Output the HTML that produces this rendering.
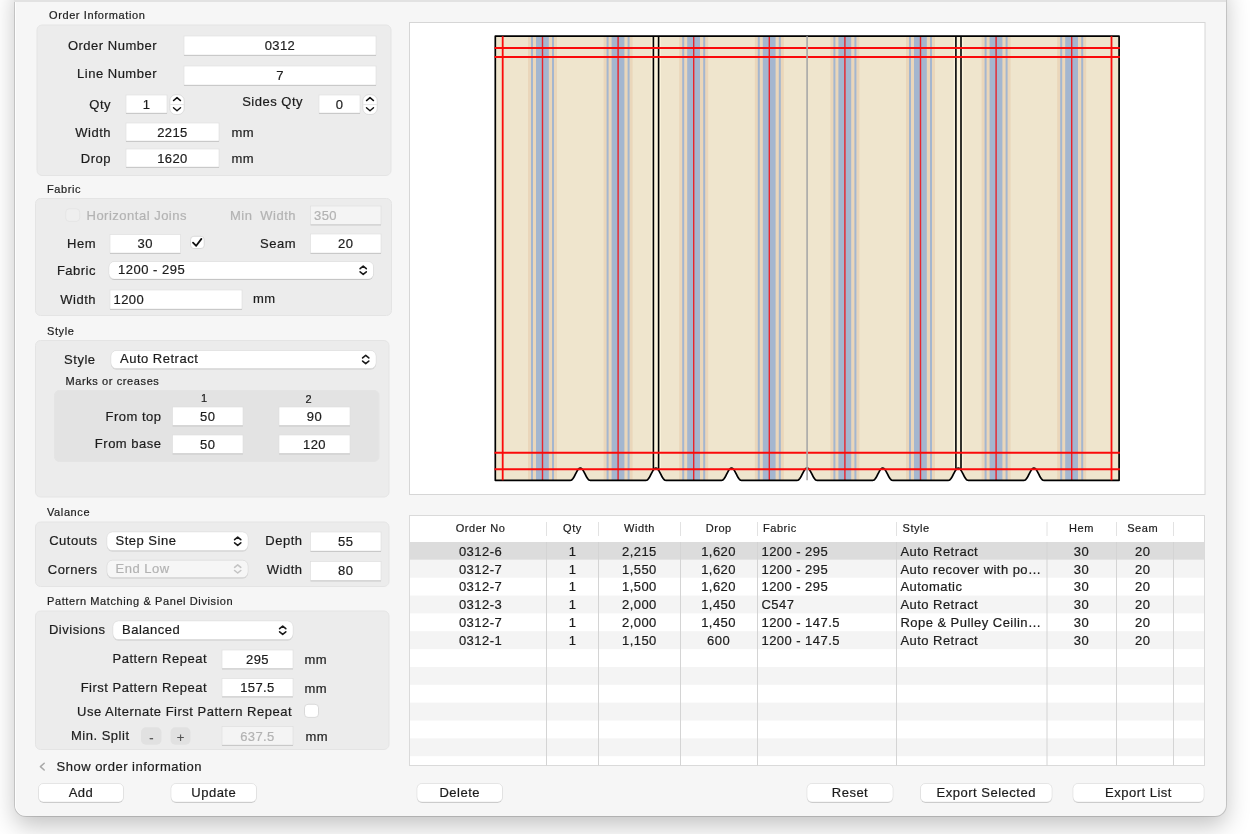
<!DOCTYPE html>
<html><head><meta charset="utf-8"><style>
html,body{margin:0;padding:0;width:1250px;height:834px;overflow:hidden;background:#f6f6f6;}
#bg{position:absolute;left:0;top:0;width:1250px;height:834px;background:#ffffff;}
#win{position:absolute;left:15px;top:-20px;width:1211px;height:836px;background:#f6f6f6;border-radius:11px;
box-shadow:0 0 0 1px rgba(0,0,0,0.14), inset 1px 0 0 rgba(255,255,255,0.8), 0 10px 24px rgba(0,0,0,0.24);}
svg{position:absolute;left:0;top:0;will-change:transform;}
text{font-family:"Liberation Sans", sans-serif;}
</style></head><body><div id="bg"></div><div id="win"></div>
<svg width="1250" height="834" viewBox="0 0 1250 834">
<defs>
<filter id="sh" x="-10%" y="-30%" width="120%" height="170%">
<feDropShadow dx="0" dy="0.5" stdDeviation="0.6" flood-color="#000" flood-opacity="0.28"/>
</filter>
</defs>

<rect x="14" y="0" width="1212" height="2" fill="#e2e2e2"/>
<text x="49" y="19.4" font-size="11" text-anchor="start" fill="#1c1c1c" stroke="#1c1c1c" stroke-width="0.2" letter-spacing="0.6" >Order Information</text>
<rect x="37" y="25" width="354" height="150.5" rx="5" fill="#ececec" stroke="#e4e4e4" stroke-width="1"/>
<text x="157" y="50.4" font-size="13" text-anchor="end" fill="#1c1c1c" stroke="#1c1c1c" stroke-width="0.2" letter-spacing="0.5" >Order Number</text>
<rect x="184" y="36" width="192" height="19" fill="#ffffff"/>
<rect x="184" y="36" width="192" height="19" fill="none" stroke="#dcdcdc" stroke-width="0.6"/>
<line x1="184" y1="55.5" x2="376" y2="55.5" stroke="#c9c9c9" stroke-width="1"/>
<text x="280.0" y="50" font-size="13" text-anchor="middle" fill="#1c1c1c" stroke="#1c1c1c" stroke-width="0.2" letter-spacing="0.4" >0312</text>
<text x="157" y="78" font-size="13" text-anchor="end" fill="#1c1c1c" stroke="#1c1c1c" stroke-width="0.2" letter-spacing="0.5" >Line Number</text>
<rect x="184" y="66" width="192" height="19" fill="#ffffff"/>
<rect x="184" y="66" width="192" height="19" fill="none" stroke="#dcdcdc" stroke-width="0.6"/>
<line x1="184" y1="85.5" x2="376" y2="85.5" stroke="#c9c9c9" stroke-width="1"/>
<text x="280.0" y="80" font-size="13" text-anchor="middle" fill="#1c1c1c" stroke="#1c1c1c" stroke-width="0.2" letter-spacing="0.4" >7</text>
<text x="111" y="108.8" font-size="13" text-anchor="end" fill="#1c1c1c" stroke="#1c1c1c" stroke-width="0.2" letter-spacing="0.5" >Qty</text>
<rect x="126" y="95" width="41" height="18" fill="#ffffff"/>
<rect x="126" y="95" width="41" height="18" fill="none" stroke="#dcdcdc" stroke-width="0.6"/>
<line x1="126" y1="113.5" x2="167" y2="113.5" stroke="#c9c9c9" stroke-width="1"/>
<text x="146.5" y="108.5" font-size="13" text-anchor="middle" fill="#1c1c1c" stroke="#1c1c1c" stroke-width="0.2" letter-spacing="0.4" >1</text>
<rect x="169.8" y="94.7" width="14.399999999999977" height="19.799999999999997" rx="6" fill="#ffffff" stroke="#d6d6d6" stroke-width="0.8"/>
<line x1="170.3" y1="104.6" x2="183.7" y2="104.6" stroke="#dedede" stroke-width="0.8"/>
<path d="M173.5 100.6 L177.0 97.6 L180.5 100.6 M173.5 107.8 L177.0 110.8 L180.5 107.8" fill="none" stroke="#111" stroke-width="1.4" stroke-linecap="round" stroke-linejoin="round"/>
<text x="303" y="105.6" font-size="13" text-anchor="end" fill="#1c1c1c" stroke="#1c1c1c" stroke-width="0.2" letter-spacing="0.5" >Sides Qty</text>
<rect x="319" y="95" width="41" height="18" fill="#ffffff"/>
<rect x="319" y="95" width="41" height="18" fill="none" stroke="#dcdcdc" stroke-width="0.6"/>
<line x1="319" y1="113.5" x2="360" y2="113.5" stroke="#c9c9c9" stroke-width="1"/>
<text x="339.5" y="108.5" font-size="13" text-anchor="middle" fill="#1c1c1c" stroke="#1c1c1c" stroke-width="0.2" letter-spacing="0.4" >0</text>
<rect x="362.8" y="94.7" width="14.399999999999977" height="19.799999999999997" rx="6" fill="#ffffff" stroke="#d6d6d6" stroke-width="0.8"/>
<line x1="363.3" y1="104.6" x2="376.7" y2="104.6" stroke="#dedede" stroke-width="0.8"/>
<path d="M366.5 100.6 L370.0 97.6 L373.5 100.6 M366.5 107.8 L370.0 110.8 L373.5 107.8" fill="none" stroke="#111" stroke-width="1.4" stroke-linecap="round" stroke-linejoin="round"/>
<text x="111" y="136.5" font-size="13" text-anchor="end" fill="#1c1c1c" stroke="#1c1c1c" stroke-width="0.2" letter-spacing="0.5" >Width</text>
<rect x="126" y="123" width="93" height="18" fill="#ffffff"/>
<rect x="126" y="123" width="93" height="18" fill="none" stroke="#dcdcdc" stroke-width="0.6"/>
<line x1="126" y1="141.5" x2="219" y2="141.5" stroke="#c9c9c9" stroke-width="1"/>
<text x="172.5" y="136.5" font-size="13" text-anchor="middle" fill="#1c1c1c" stroke="#1c1c1c" stroke-width="0.2" letter-spacing="0.4" >2215</text>
<text x="231.5" y="136.5" font-size="13" text-anchor="start" fill="#1c1c1c" stroke="#1c1c1c" stroke-width="0.2" letter-spacing="0.5" >mm</text>
<text x="111" y="163" font-size="13" text-anchor="end" fill="#1c1c1c" stroke="#1c1c1c" stroke-width="0.2" letter-spacing="0.5" >Drop</text>
<rect x="126" y="149" width="93" height="18" fill="#ffffff"/>
<rect x="126" y="149" width="93" height="18" fill="none" stroke="#dcdcdc" stroke-width="0.6"/>
<line x1="126" y1="167.5" x2="219" y2="167.5" stroke="#c9c9c9" stroke-width="1"/>
<text x="172.5" y="163" font-size="13" text-anchor="middle" fill="#1c1c1c" stroke="#1c1c1c" stroke-width="0.2" letter-spacing="0.4" >1620</text>
<text x="231.5" y="163" font-size="13" text-anchor="start" fill="#1c1c1c" stroke="#1c1c1c" stroke-width="0.2" letter-spacing="0.5" >mm</text>
<text x="47" y="192.8" font-size="11" text-anchor="start" fill="#1c1c1c" stroke="#1c1c1c" stroke-width="0.2" letter-spacing="0.6" >Fabric</text>
<rect x="35.5" y="198.5" width="356.0" height="117.0" rx="5" fill="#ececec" stroke="#e4e4e4" stroke-width="1"/>
<rect x="65.7" y="208.8" width="14" height="12.6" rx="3.5" fill="#efefef" stroke="#e2e2e2" stroke-width="0.8"/>
<text x="86.5" y="219.7" font-size="13" text-anchor="start" fill="#b3b3b3" stroke="#b3b3b3" stroke-width="0.2" letter-spacing="0.5" >Horizontal Joins</text>
<text x="230" y="219.8" font-size="13" text-anchor="start" fill="#b3b3b3" stroke="#b3b3b3" stroke-width="0.2" letter-spacing="0.5" >Min</text>
<text x="296" y="219.8" font-size="13" text-anchor="end" fill="#b3b3b3" stroke="#b3b3b3" stroke-width="0.2" letter-spacing="0.5" >Width</text>
<rect x="310.5" y="206" width="70.5" height="18.5" fill="#f4f4f4"/>
<rect x="310.5" y="206" width="70.5" height="18.5" fill="none" stroke="#dcdcdc" stroke-width="0.6"/>
<line x1="310.5" y1="225.0" x2="381" y2="225.0" stroke="#c9c9c9" stroke-width="1"/>
<text x="314" y="219.7" font-size="13" text-anchor="start" fill="#b3b3b3" stroke="#b3b3b3" stroke-width="0.2" letter-spacing="0.4" >350</text>
<text x="96" y="248" font-size="13" text-anchor="end" fill="#1c1c1c" stroke="#1c1c1c" stroke-width="0.2" letter-spacing="0.5" >Hem</text>
<rect x="110" y="234.5" width="70.5" height="18.5" fill="#ffffff"/>
<rect x="110" y="234.5" width="70.5" height="18.5" fill="none" stroke="#dcdcdc" stroke-width="0.6"/>
<line x1="110" y1="253.5" x2="180.5" y2="253.5" stroke="#c9c9c9" stroke-width="1"/>
<text x="145.25" y="248" font-size="13" text-anchor="middle" fill="#1c1c1c" stroke="#1c1c1c" stroke-width="0.2" letter-spacing="0.4" >30</text>
<rect x="190.6" y="236.3" width="13.6" height="12.2" rx="3.2" fill="#ffffff" stroke="#d2d2d2" stroke-width="0.8"/>
<path d="M193 242.6 L196.2 245.8 L201.4 238.9" fill="none" stroke="#111" stroke-width="1.8" stroke-linecap="round" stroke-linejoin="round"/>
<text x="296" y="247.8" font-size="13" text-anchor="end" fill="#1c1c1c" stroke="#1c1c1c" stroke-width="0.2" letter-spacing="0.5" >Seam</text>
<rect x="310.5" y="234" width="70.5" height="19" fill="#ffffff"/>
<rect x="310.5" y="234" width="70.5" height="19" fill="none" stroke="#dcdcdc" stroke-width="0.6"/>
<line x1="310.5" y1="253.5" x2="381" y2="253.5" stroke="#c9c9c9" stroke-width="1"/>
<text x="345.75" y="248" font-size="13" text-anchor="middle" fill="#1c1c1c" stroke="#1c1c1c" stroke-width="0.2" letter-spacing="0.4" >20</text>
<text x="96" y="275" font-size="13" text-anchor="end" fill="#1c1c1c" stroke="#1c1c1c" stroke-width="0.2" letter-spacing="0.5" >Fabric</text>
<rect x="109" y="261.5" width="264.5" height="17.5" rx="5.5" fill="#ffffff" filter="url(#sh)"/>
<rect x="109" y="261.5" width="264.5" height="17.5" rx="5.5" fill="none" stroke="#000" stroke-opacity="0.07" stroke-width="0.8"/>
<text x="118" y="273.6" font-size="13" text-anchor="start" fill="#1c1c1c" stroke="#1c1c1c" stroke-width="0.2" letter-spacing="0.5" >1200 - 295</text>
<path d="M360.09999999999997 268.65 L363.2 266.15 L366.3 268.65 M360.09999999999997 271.85 L363.2 274.35 L366.3 271.85" fill="none" stroke="#1a1a1a" stroke-width="1.6" stroke-linecap="round" stroke-linejoin="round"/>
<text x="96" y="303.5" font-size="13" text-anchor="end" fill="#1c1c1c" stroke="#1c1c1c" stroke-width="0.2" letter-spacing="0.5" >Width</text>
<rect x="110" y="290" width="132" height="19" fill="#ffffff"/>
<rect x="110" y="290" width="132" height="19" fill="none" stroke="#dcdcdc" stroke-width="0.6"/>
<line x1="110" y1="309.5" x2="242" y2="309.5" stroke="#c9c9c9" stroke-width="1"/>
<text x="113.5" y="304.2" font-size="13" text-anchor="start" fill="#1c1c1c" stroke="#1c1c1c" stroke-width="0.2" letter-spacing="0.4" >1200</text>
<text x="253" y="303" font-size="13" text-anchor="start" fill="#1c1c1c" stroke="#1c1c1c" stroke-width="0.2" letter-spacing="0.5" >mm</text>
<text x="47" y="334.7" font-size="11" text-anchor="start" fill="#1c1c1c" stroke="#1c1c1c" stroke-width="0.2" letter-spacing="0.6" >Style</text>
<rect x="35.5" y="340.5" width="353.5" height="156.5" rx="5" fill="#ececec" stroke="#e4e4e4" stroke-width="1"/>
<text x="95.5" y="364" font-size="13" text-anchor="end" fill="#1c1c1c" stroke="#1c1c1c" stroke-width="0.2" letter-spacing="0.5" >Style</text>
<rect x="111" y="350.5" width="265" height="18.0" rx="5.5" fill="#ffffff" filter="url(#sh)"/>
<rect x="111" y="350.5" width="265" height="18.0" rx="5.5" fill="none" stroke="#000" stroke-opacity="0.07" stroke-width="0.8"/>
<text x="120" y="363" font-size="13" text-anchor="start" fill="#1c1c1c" stroke="#1c1c1c" stroke-width="0.2" letter-spacing="0.5" >Auto Retract</text>
<path d="M362.59999999999997 357.9 L365.7 355.4 L368.8 357.9 M362.59999999999997 361.1 L365.7 363.6 L368.8 361.1" fill="none" stroke="#1a1a1a" stroke-width="1.6" stroke-linecap="round" stroke-linejoin="round"/>
<text x="65.5" y="384.8" font-size="11" text-anchor="start" fill="#1c1c1c" stroke="#1c1c1c" stroke-width="0.2" letter-spacing="0.6" >Marks or creases</text>
<rect x="54.5" y="390.5" width="324.5" height="71.0" rx="5" fill="#e3e3e3" stroke="#e4e4e4" stroke-width="1"/>
<text x="204" y="402.4" font-size="11" text-anchor="middle" fill="#1c1c1c" stroke="#1c1c1c" stroke-width="0.2" letter-spacing="0" >1</text>
<text x="308.6" y="402.8" font-size="11" text-anchor="middle" fill="#1c1c1c" stroke="#1c1c1c" stroke-width="0.2" letter-spacing="0" >2</text>
<text x="161.5" y="420.8" font-size="13" text-anchor="end" fill="#1c1c1c" stroke="#1c1c1c" stroke-width="0.2" letter-spacing="0.5" >From top</text>
<rect x="172.5" y="407" width="70.5" height="18.5" fill="#ffffff"/>
<rect x="172.5" y="407" width="70.5" height="18.5" fill="none" stroke="#dcdcdc" stroke-width="0.6"/>
<line x1="172.5" y1="426.0" x2="243" y2="426.0" stroke="#c9c9c9" stroke-width="1"/>
<text x="207.75" y="421" font-size="13" text-anchor="middle" fill="#1c1c1c" stroke="#1c1c1c" stroke-width="0.2" letter-spacing="0.4" >50</text>
<rect x="279" y="407" width="71" height="18.5" fill="#ffffff"/>
<rect x="279" y="407" width="71" height="18.5" fill="none" stroke="#dcdcdc" stroke-width="0.6"/>
<line x1="279" y1="426.0" x2="350" y2="426.0" stroke="#c9c9c9" stroke-width="1"/>
<text x="314.5" y="421" font-size="13" text-anchor="middle" fill="#1c1c1c" stroke="#1c1c1c" stroke-width="0.2" letter-spacing="0.4" >90</text>
<text x="161.5" y="447.5" font-size="13" text-anchor="end" fill="#1c1c1c" stroke="#1c1c1c" stroke-width="0.2" letter-spacing="0.5" >From base</text>
<rect x="172.5" y="435" width="70.5" height="18.5" fill="#ffffff"/>
<rect x="172.5" y="435" width="70.5" height="18.5" fill="none" stroke="#dcdcdc" stroke-width="0.6"/>
<line x1="172.5" y1="454.0" x2="243" y2="454.0" stroke="#c9c9c9" stroke-width="1"/>
<text x="207.75" y="448.5" font-size="13" text-anchor="middle" fill="#1c1c1c" stroke="#1c1c1c" stroke-width="0.2" letter-spacing="0.4" >50</text>
<rect x="279" y="435" width="71" height="18.5" fill="#ffffff"/>
<rect x="279" y="435" width="71" height="18.5" fill="none" stroke="#dcdcdc" stroke-width="0.6"/>
<line x1="279" y1="454.0" x2="350" y2="454.0" stroke="#c9c9c9" stroke-width="1"/>
<text x="314.5" y="448.5" font-size="13" text-anchor="middle" fill="#1c1c1c" stroke="#1c1c1c" stroke-width="0.2" letter-spacing="0.4" >120</text>
<text x="47" y="516" font-size="11" text-anchor="start" fill="#1c1c1c" stroke="#1c1c1c" stroke-width="0.2" letter-spacing="0.6" >Valance</text>
<rect x="35.5" y="522" width="353.5" height="64.5" rx="5" fill="#ececec" stroke="#e4e4e4" stroke-width="1"/>
<text x="97.5" y="545.3" font-size="13" text-anchor="end" fill="#1c1c1c" stroke="#1c1c1c" stroke-width="0.2" letter-spacing="0.5" >Cutouts</text>
<rect x="107" y="532" width="141" height="18.5" rx="5.5" fill="#ffffff" filter="url(#sh)"/>
<rect x="107" y="532" width="141" height="18.5" rx="5.5" fill="none" stroke="#000" stroke-opacity="0.07" stroke-width="0.8"/>
<text x="115.5" y="545" font-size="13" text-anchor="start" fill="#1c1c1c" stroke="#1c1c1c" stroke-width="0.2" letter-spacing="0.5" >Step Sine</text>
<path d="M234.6 539.65 L237.7 537.15 L240.79999999999998 539.65 M234.6 542.85 L237.7 545.35 L240.79999999999998 542.85" fill="none" stroke="#1a1a1a" stroke-width="1.6" stroke-linecap="round" stroke-linejoin="round"/>
<text x="302.5" y="545.3" font-size="13" text-anchor="end" fill="#1c1c1c" stroke="#1c1c1c" stroke-width="0.2" letter-spacing="0.5" >Depth</text>
<rect x="310.5" y="532" width="70.5" height="19" fill="#ffffff"/>
<rect x="310.5" y="532" width="70.5" height="19" fill="none" stroke="#dcdcdc" stroke-width="0.6"/>
<line x1="310.5" y1="551.5" x2="381" y2="551.5" stroke="#c9c9c9" stroke-width="1"/>
<text x="345.75" y="546" font-size="13" text-anchor="middle" fill="#1c1c1c" stroke="#1c1c1c" stroke-width="0.2" letter-spacing="0.4" >55</text>
<text x="97.5" y="573.6" font-size="13" text-anchor="end" fill="#1c1c1c" stroke="#1c1c1c" stroke-width="0.2" letter-spacing="0.5" >Corners</text>
<rect x="107" y="560.2" width="141" height="17.399999999999977" rx="5.5" fill="#f6f6f6" filter="url(#sh)"/>
<rect x="107" y="560.2" width="141" height="17.399999999999977" rx="5.5" fill="none" stroke="#000" stroke-opacity="0.07" stroke-width="0.8"/>
<text x="115.5" y="572.8" font-size="13" text-anchor="start" fill="#b3b3b3" stroke="#b3b3b3" stroke-width="0.2" letter-spacing="0.5" >End Low</text>
<path d="M234.6 567.3000000000001 L237.7 564.8000000000001 L240.79999999999998 567.3000000000001 M234.6 570.5000000000001 L237.7 573.0000000000001 L240.79999999999998 570.5000000000001" fill="none" stroke="#c4c4c4" stroke-width="1.6" stroke-linecap="round" stroke-linejoin="round"/>
<text x="302.5" y="574.4" font-size="13" text-anchor="end" fill="#1c1c1c" stroke="#1c1c1c" stroke-width="0.2" letter-spacing="0.5" >Width</text>
<rect x="310.5" y="561.5" width="70.5" height="19.0" fill="#ffffff"/>
<rect x="310.5" y="561.5" width="70.5" height="19.0" fill="none" stroke="#dcdcdc" stroke-width="0.6"/>
<line x1="310.5" y1="581.0" x2="381" y2="581.0" stroke="#c9c9c9" stroke-width="1"/>
<text x="345.75" y="575" font-size="13" text-anchor="middle" fill="#1c1c1c" stroke="#1c1c1c" stroke-width="0.2" letter-spacing="0.4" >80</text>
<text x="47" y="604.9" font-size="11" text-anchor="start" fill="#1c1c1c" stroke="#1c1c1c" stroke-width="0.2" letter-spacing="0.6" >Pattern Matching &amp; Panel Division</text>
<rect x="35.5" y="611" width="353.5" height="138.5" rx="5" fill="#ececec" stroke="#e4e4e4" stroke-width="1"/>
<text x="105.5" y="634.4" font-size="13" text-anchor="end" fill="#1c1c1c" stroke="#1c1c1c" stroke-width="0.2" letter-spacing="0.5" >Divisions</text>
<rect x="113" y="621" width="180" height="18.5" rx="5.5" fill="#ffffff" filter="url(#sh)"/>
<rect x="113" y="621" width="180" height="18.5" rx="5.5" fill="none" stroke="#000" stroke-opacity="0.07" stroke-width="0.8"/>
<text x="122" y="634" font-size="13" text-anchor="start" fill="#1c1c1c" stroke="#1c1c1c" stroke-width="0.2" letter-spacing="0.5" >Balanced</text>
<path d="M279.59999999999997 628.65 L282.7 626.15 L285.8 628.65 M279.59999999999997 631.85 L282.7 634.35 L285.8 631.85" fill="none" stroke="#1a1a1a" stroke-width="1.6" stroke-linecap="round" stroke-linejoin="round"/>
<text x="207" y="663.2" font-size="13" text-anchor="end" fill="#1c1c1c" stroke="#1c1c1c" stroke-width="0.2" letter-spacing="0.5" >Pattern Repeat</text>
<rect x="222" y="650" width="71" height="18.5" fill="#ffffff"/>
<rect x="222" y="650" width="71" height="18.5" fill="none" stroke="#dcdcdc" stroke-width="0.6"/>
<line x1="222" y1="669.0" x2="293" y2="669.0" stroke="#c9c9c9" stroke-width="1"/>
<text x="257.5" y="663.5" font-size="13" text-anchor="middle" fill="#1c1c1c" stroke="#1c1c1c" stroke-width="0.2" letter-spacing="0.4" >295</text>
<text x="304.5" y="664" font-size="13" text-anchor="start" fill="#1c1c1c" stroke="#1c1c1c" stroke-width="0.2" letter-spacing="0.5" >mm</text>
<text x="207" y="692" font-size="13" text-anchor="end" fill="#1c1c1c" stroke="#1c1c1c" stroke-width="0.2" letter-spacing="0.5" >First Pattern Repeat</text>
<rect x="222" y="678.5" width="71" height="18.0" fill="#ffffff"/>
<rect x="222" y="678.5" width="71" height="18.0" fill="none" stroke="#dcdcdc" stroke-width="0.6"/>
<line x1="222" y1="697.0" x2="293" y2="697.0" stroke="#c9c9c9" stroke-width="1"/>
<text x="257.5" y="692" font-size="13" text-anchor="middle" fill="#1c1c1c" stroke="#1c1c1c" stroke-width="0.2" letter-spacing="0.4" >157.5</text>
<text x="304.5" y="692.5" font-size="13" text-anchor="start" fill="#1c1c1c" stroke="#1c1c1c" stroke-width="0.2" letter-spacing="0.5" >mm</text>
<text x="292" y="716" font-size="13" text-anchor="end" fill="#1c1c1c" stroke="#1c1c1c" stroke-width="0.2" letter-spacing="0.5" >Use Alternate First Pattern Repeat</text>
<rect x="304.5" y="704.3" width="14" height="13.1" rx="3.5" fill="#ffffff" stroke="#d2d2d2" stroke-width="0.8"/>
<text x="129.5" y="740.3" font-size="13" text-anchor="end" fill="#1c1c1c" stroke="#1c1c1c" stroke-width="0.2" letter-spacing="0.5" >Min. Split</text>
<rect x="141" y="727.2" width="20.5" height="17.6" rx="5" fill="#e1e1e1"/>
<rect x="170.5" y="727.2" width="20" height="17.6" rx="5" fill="#e1e1e1"/>
<text x="151.5" y="741.5" font-size="13" text-anchor="middle" fill="#555" stroke="#555" stroke-width="0.2" letter-spacing="0" >-</text>
<text x="180.5" y="742.3" font-size="13" text-anchor="middle" fill="#555" stroke="#555" stroke-width="0.2" letter-spacing="0" >+</text>
<rect x="222" y="726.5" width="71" height="18.5" fill="#f4f4f4"/>
<rect x="222" y="726.5" width="71" height="18.5" fill="none" stroke="#dcdcdc" stroke-width="0.6"/>
<line x1="222" y1="745.5" x2="293" y2="745.5" stroke="#c9c9c9" stroke-width="1"/>
<text x="257.5" y="740.5" font-size="13" text-anchor="middle" fill="#b3b3b3" stroke="#b3b3b3" stroke-width="0.2" letter-spacing="0.4" >637.5</text>
<text x="305.5" y="740.5" font-size="13" text-anchor="start" fill="#1c1c1c" stroke="#1c1c1c" stroke-width="0.2" letter-spacing="0.5" >mm</text>
<path d="M44.2 763.2 L40.4 766.6 L44.2 770" fill="none" stroke="#a8a8a8" stroke-width="1.5" stroke-linecap="round" stroke-linejoin="round"/>
<text x="56.5" y="770.9" font-size="13" text-anchor="start" fill="#1c1c1c" stroke="#1c1c1c" stroke-width="0.2" letter-spacing="0.5" >Show order information</text>
<rect x="38.5" y="783.5" width="85.0" height="18.5" rx="5" fill="#ffffff" filter="url(#sh)"/>
<rect x="38.5" y="783.5" width="85.0" height="18.5" rx="5" fill="none" stroke="#000" stroke-opacity="0.09" stroke-width="0.8"/>
<text x="81.0" y="796.5" font-size="13" text-anchor="middle" fill="#1c1c1c" stroke="#1c1c1c" stroke-width="0.2" letter-spacing="0.5" >Add</text>
<rect x="171" y="783.5" width="85.5" height="18.5" rx="5" fill="#ffffff" filter="url(#sh)"/>
<rect x="171" y="783.5" width="85.5" height="18.5" rx="5" fill="none" stroke="#000" stroke-opacity="0.09" stroke-width="0.8"/>
<text x="213.75" y="796.5" font-size="13" text-anchor="middle" fill="#1c1c1c" stroke="#1c1c1c" stroke-width="0.2" letter-spacing="0.5" >Update</text>
<rect x="409.5" y="22.5" width="795.5" height="472" fill="#ffffff" stroke="#d6d6d6" stroke-width="1"/>
<clipPath id="fab"><path d="M495.3 36.2 L1119.1 36.2 L1119.1 480.3 L1043.60 480.30 L1042.79 480.09 L1041.98 479.48 L1041.17 478.50 L1040.37 477.23 L1039.56 475.74 L1038.75 474.15 L1037.94 472.56 L1037.13 471.08 L1036.32 469.80 L1035.52 468.82 L1034.71 468.21 L1033.90 468.00 L1033.09 468.21 L1032.28 468.82 L1031.47 469.80 L1030.67 471.08 L1029.86 472.56 L1029.05 474.15 L1028.24 475.74 L1027.43 477.23 L1026.62 478.50 L1025.82 479.48 L1025.01 480.09 L1024.20 480.30 L968.00 480.30 L967.19 480.09 L966.38 479.48 L965.58 478.50 L964.77 477.23 L963.96 475.74 L963.15 474.15 L962.34 472.56 L961.53 471.08 L960.73 469.80 L959.92 468.82 L959.11 468.21 L958.30 468.00 L957.49 468.21 L956.68 468.82 L955.88 469.80 L955.07 471.07 L954.26 472.56 L953.45 474.15 L952.64 475.74 L951.83 477.22 L951.02 478.50 L950.22 479.48 L949.41 480.09 L948.60 480.30 L892.40 480.30 L891.59 480.09 L890.78 479.48 L889.98 478.50 L889.17 477.23 L888.36 475.74 L887.55 474.15 L886.74 472.56 L885.93 471.08 L885.12 469.80 L884.32 468.82 L883.51 468.21 L882.70 468.00 L881.89 468.21 L881.08 468.82 L880.27 469.80 L879.47 471.07 L878.66 472.56 L877.85 474.15 L877.04 475.74 L876.23 477.22 L875.42 478.50 L874.62 479.48 L873.81 480.09 L873.00 480.30 L816.80 480.30 L815.99 480.09 L815.18 479.48 L814.38 478.50 L813.57 477.23 L812.76 475.74 L811.95 474.15 L811.14 472.56 L810.33 471.08 L809.52 469.80 L808.72 468.82 L807.91 468.21 L807.10 468.00 L806.29 468.21 L805.48 468.82 L804.67 469.80 L803.87 471.07 L803.06 472.56 L802.25 474.15 L801.44 475.74 L800.63 477.22 L799.82 478.50 L799.02 479.48 L798.21 480.09 L797.40 480.30 L741.20 480.30 L740.39 480.09 L739.58 479.48 L738.78 478.50 L737.97 477.23 L737.16 475.74 L736.35 474.15 L735.54 472.56 L734.73 471.08 L733.93 469.80 L733.12 468.82 L732.31 468.21 L731.50 468.00 L730.69 468.21 L729.88 468.82 L729.08 469.80 L728.27 471.07 L727.46 472.56 L726.65 474.15 L725.84 475.74 L725.03 477.22 L724.23 478.50 L723.42 479.48 L722.61 480.09 L721.80 480.30 L665.60 480.30 L664.79 480.09 L663.98 479.48 L663.18 478.50 L662.37 477.23 L661.56 475.74 L660.75 474.15 L659.94 472.56 L659.13 471.08 L658.33 469.80 L657.52 468.82 L656.71 468.21 L655.90 468.00 L655.09 468.21 L654.28 468.82 L653.48 469.80 L652.67 471.07 L651.86 472.56 L651.05 474.15 L650.24 475.74 L649.43 477.22 L648.62 478.50 L647.82 479.48 L647.01 480.09 L646.20 480.30 L590.00 480.30 L589.19 480.09 L588.38 479.48 L587.58 478.50 L586.77 477.23 L585.96 475.74 L585.15 474.15 L584.34 472.56 L583.53 471.08 L582.73 469.80 L581.92 468.82 L581.11 468.21 L580.30 468.00 L579.49 468.21 L578.68 468.82 L577.88 469.80 L577.07 471.07 L576.26 472.56 L575.45 474.15 L574.64 475.74 L573.83 477.22 L573.02 478.50 L572.22 479.48 L571.41 480.09 L570.60 480.30 L495.3 480.3 Z"/></clipPath>
<g clip-path="url(#fab)">
<rect x="495.3" y="36.2" width="623.8" height="444.1" fill="#efe5cd"/>
<rect x="528.0" y="36.2" width="29" height="444.1" fill="#ead6ba"/>
<rect x="531.0" y="36.2" width="2.0" height="444.1" fill="#a4b6cf"/>
<rect x="536.0" y="36.2" width="12.8" height="444.1" fill="#a4b6cf"/>
<rect x="552.0" y="36.2" width="2.0" height="444.1" fill="#a4b6cf"/>
<rect x="541.8" y="36.2" width="1.4" height="444.1" fill="#e8242c"/>
<rect x="603.6" y="36.2" width="29" height="444.1" fill="#ead6ba"/>
<rect x="606.6" y="36.2" width="2.0" height="444.1" fill="#a4b6cf"/>
<rect x="611.6" y="36.2" width="12.8" height="444.1" fill="#a4b6cf"/>
<rect x="627.6" y="36.2" width="2.0" height="444.1" fill="#a4b6cf"/>
<rect x="617.4" y="36.2" width="1.4" height="444.1" fill="#e8242c"/>
<rect x="679.2" y="36.2" width="29" height="444.1" fill="#ead6ba"/>
<rect x="682.2" y="36.2" width="2.0" height="444.1" fill="#a4b6cf"/>
<rect x="687.2" y="36.2" width="12.8" height="444.1" fill="#a4b6cf"/>
<rect x="703.2" y="36.2" width="2.0" height="444.1" fill="#a4b6cf"/>
<rect x="693.0" y="36.2" width="1.4" height="444.1" fill="#e8242c"/>
<rect x="754.8" y="36.2" width="29" height="444.1" fill="#ead6ba"/>
<rect x="757.8" y="36.2" width="2.0" height="444.1" fill="#a4b6cf"/>
<rect x="762.8" y="36.2" width="12.8" height="444.1" fill="#a4b6cf"/>
<rect x="778.8" y="36.2" width="2.0" height="444.1" fill="#a4b6cf"/>
<rect x="768.5999999999999" y="36.2" width="1.4" height="444.1" fill="#e8242c"/>
<rect x="830.4" y="36.2" width="29" height="444.1" fill="#ead6ba"/>
<rect x="833.4" y="36.2" width="2.0" height="444.1" fill="#a4b6cf"/>
<rect x="838.4" y="36.2" width="12.8" height="444.1" fill="#a4b6cf"/>
<rect x="854.4" y="36.2" width="2.0" height="444.1" fill="#a4b6cf"/>
<rect x="844.1999999999999" y="36.2" width="1.4" height="444.1" fill="#e8242c"/>
<rect x="906.0" y="36.2" width="29" height="444.1" fill="#ead6ba"/>
<rect x="909.0" y="36.2" width="2.0" height="444.1" fill="#a4b6cf"/>
<rect x="914.0" y="36.2" width="12.8" height="444.1" fill="#a4b6cf"/>
<rect x="930.0" y="36.2" width="2.0" height="444.1" fill="#a4b6cf"/>
<rect x="919.8" y="36.2" width="1.4" height="444.1" fill="#e8242c"/>
<rect x="981.5999999999999" y="36.2" width="29" height="444.1" fill="#ead6ba"/>
<rect x="984.5999999999999" y="36.2" width="2.0" height="444.1" fill="#a4b6cf"/>
<rect x="989.5999999999999" y="36.2" width="12.8" height="444.1" fill="#a4b6cf"/>
<rect x="1005.5999999999999" y="36.2" width="2.0" height="444.1" fill="#a4b6cf"/>
<rect x="995.3999999999999" y="36.2" width="1.4" height="444.1" fill="#e8242c"/>
<rect x="1057.1999999999998" y="36.2" width="29" height="444.1" fill="#ead6ba"/>
<rect x="1060.1999999999998" y="36.2" width="2.0" height="444.1" fill="#a4b6cf"/>
<rect x="1065.1999999999998" y="36.2" width="12.8" height="444.1" fill="#a4b6cf"/>
<rect x="1081.1999999999998" y="36.2" width="2.0" height="444.1" fill="#a4b6cf"/>
<rect x="1070.9999999999998" y="36.2" width="1.4" height="444.1" fill="#e8242c"/>
<rect x="651.1" y="36.2" width="9.800000000000045" height="444.1" fill="#fbf3dc"/>
<rect x="953.6" y="36.2" width="9.700000000000022" height="444.1" fill="#fbf3dc"/>
</g>
<path d="M495.3 36.2 L1119.1 36.2 L1119.1 480.3 L1043.60 480.30 L1042.79 480.09 L1041.98 479.48 L1041.17 478.50 L1040.37 477.23 L1039.56 475.74 L1038.75 474.15 L1037.94 472.56 L1037.13 471.08 L1036.32 469.80 L1035.52 468.82 L1034.71 468.21 L1033.90 468.00 L1033.09 468.21 L1032.28 468.82 L1031.47 469.80 L1030.67 471.08 L1029.86 472.56 L1029.05 474.15 L1028.24 475.74 L1027.43 477.23 L1026.62 478.50 L1025.82 479.48 L1025.01 480.09 L1024.20 480.30 L968.00 480.30 L967.19 480.09 L966.38 479.48 L965.58 478.50 L964.77 477.23 L963.96 475.74 L963.15 474.15 L962.34 472.56 L961.53 471.08 L960.73 469.80 L959.92 468.82 L959.11 468.21 L958.30 468.00 L957.49 468.21 L956.68 468.82 L955.88 469.80 L955.07 471.07 L954.26 472.56 L953.45 474.15 L952.64 475.74 L951.83 477.22 L951.02 478.50 L950.22 479.48 L949.41 480.09 L948.60 480.30 L892.40 480.30 L891.59 480.09 L890.78 479.48 L889.98 478.50 L889.17 477.23 L888.36 475.74 L887.55 474.15 L886.74 472.56 L885.93 471.08 L885.12 469.80 L884.32 468.82 L883.51 468.21 L882.70 468.00 L881.89 468.21 L881.08 468.82 L880.27 469.80 L879.47 471.07 L878.66 472.56 L877.85 474.15 L877.04 475.74 L876.23 477.22 L875.42 478.50 L874.62 479.48 L873.81 480.09 L873.00 480.30 L816.80 480.30 L815.99 480.09 L815.18 479.48 L814.38 478.50 L813.57 477.23 L812.76 475.74 L811.95 474.15 L811.14 472.56 L810.33 471.08 L809.52 469.80 L808.72 468.82 L807.91 468.21 L807.10 468.00 L806.29 468.21 L805.48 468.82 L804.67 469.80 L803.87 471.07 L803.06 472.56 L802.25 474.15 L801.44 475.74 L800.63 477.22 L799.82 478.50 L799.02 479.48 L798.21 480.09 L797.40 480.30 L741.20 480.30 L740.39 480.09 L739.58 479.48 L738.78 478.50 L737.97 477.23 L737.16 475.74 L736.35 474.15 L735.54 472.56 L734.73 471.08 L733.93 469.80 L733.12 468.82 L732.31 468.21 L731.50 468.00 L730.69 468.21 L729.88 468.82 L729.08 469.80 L728.27 471.07 L727.46 472.56 L726.65 474.15 L725.84 475.74 L725.03 477.22 L724.23 478.50 L723.42 479.48 L722.61 480.09 L721.80 480.30 L665.60 480.30 L664.79 480.09 L663.98 479.48 L663.18 478.50 L662.37 477.23 L661.56 475.74 L660.75 474.15 L659.94 472.56 L659.13 471.08 L658.33 469.80 L657.52 468.82 L656.71 468.21 L655.90 468.00 L655.09 468.21 L654.28 468.82 L653.48 469.80 L652.67 471.07 L651.86 472.56 L651.05 474.15 L650.24 475.74 L649.43 477.22 L648.62 478.50 L647.82 479.48 L647.01 480.09 L646.20 480.30 L590.00 480.30 L589.19 480.09 L588.38 479.48 L587.58 478.50 L586.77 477.23 L585.96 475.74 L585.15 474.15 L584.34 472.56 L583.53 471.08 L582.73 469.80 L581.92 468.82 L581.11 468.21 L580.30 468.00 L579.49 468.21 L578.68 468.82 L577.88 469.80 L577.07 471.07 L576.26 472.56 L575.45 474.15 L574.64 475.74 L573.83 477.22 L573.02 478.50 L572.22 479.48 L571.41 480.09 L570.60 480.30 L495.3 480.3 Z" fill="none" stroke="#000" stroke-width="1.7" stroke-linejoin="round"/>
<line x1="653.4" y1="36.2" x2="653.4" y2="470.41" stroke="#000" stroke-width="1.6"/>
<line x1="658.6" y1="36.2" x2="658.6" y2="470.71" stroke="#000" stroke-width="1.6"/>
<line x1="955.9" y1="36.2" x2="955.9" y2="470.27" stroke="#000" stroke-width="1.6"/>
<line x1="961.0" y1="36.2" x2="961.0" y2="470.71" stroke="#000" stroke-width="1.6"/>
<line x1="502.7" y1="36.2" x2="502.7" y2="480.3" stroke="#fb0a0a" stroke-width="1.8"/>
<line x1="1111.5" y1="36.2" x2="1111.5" y2="480.3" stroke="#fb0a0a" stroke-width="1.8"/>
<line x1="494.5" y1="47.9" x2="1119.8999999999999" y2="47.9" stroke="#fb0a0a" stroke-width="2"/>
<line x1="494.5" y1="57.1" x2="1119.8999999999999" y2="57.1" stroke="#fb0a0a" stroke-width="2"/>
<line x1="494.5" y1="452.7" x2="1119.8999999999999" y2="452.7" stroke="#fb0a0a" stroke-width="2"/>
<line x1="494.5" y1="469.2" x2="1119.8999999999999" y2="469.2" stroke="#fb0a0a" stroke-width="2"/>
<line x1="807.1" y1="36.2" x2="807.1" y2="480.3" stroke="#a8a8a8" stroke-width="1.6"/>
<rect x="409.5" y="515.5" width="795.0" height="250.0" fill="#ffffff" stroke="#dadada" stroke-width="1"/>
<rect x="410.0" y="542" width="794.0" height="17.85" fill="#dcdcdc"/>
<rect x="410.0" y="559.85" width="794.0" height="17.85" fill="#f4f4f4"/>
<rect x="410.0" y="595.5500000000001" width="794.0" height="17.85" fill="#f4f4f4"/>
<rect x="410.0" y="631.2500000000001" width="794.0" height="17.85" fill="#f4f4f4"/>
<rect x="410.0" y="666.9500000000002" width="794.0" height="17.85" fill="#f4f4f4"/>
<rect x="410.0" y="702.6500000000002" width="794.0" height="17.85" fill="#f4f4f4"/>
<rect x="410.0" y="738.3500000000003" width="794.0" height="17.85" fill="#f4f4f4"/>
<line x1="546.5" y1="542" x2="546.5" y2="765.5" stroke="#d4d4d4" stroke-width="1"/>
<line x1="546.5" y1="522" x2="546.5" y2="536" stroke="#e2e2e2" stroke-width="1"/>
<line x1="598.5" y1="542" x2="598.5" y2="765.5" stroke="#d4d4d4" stroke-width="1"/>
<line x1="598.5" y1="522" x2="598.5" y2="536" stroke="#e2e2e2" stroke-width="1"/>
<line x1="680.5" y1="542" x2="680.5" y2="765.5" stroke="#d4d4d4" stroke-width="1"/>
<line x1="680.5" y1="522" x2="680.5" y2="536" stroke="#e2e2e2" stroke-width="1"/>
<line x1="757.5" y1="542" x2="757.5" y2="765.5" stroke="#d4d4d4" stroke-width="1"/>
<line x1="757.5" y1="522" x2="757.5" y2="536" stroke="#e2e2e2" stroke-width="1"/>
<line x1="896.5" y1="542" x2="896.5" y2="765.5" stroke="#d4d4d4" stroke-width="1"/>
<line x1="896.5" y1="522" x2="896.5" y2="536" stroke="#e2e2e2" stroke-width="1"/>
<line x1="1047" y1="542" x2="1047" y2="765.5" stroke="#d4d4d4" stroke-width="1"/>
<line x1="1047" y1="522" x2="1047" y2="536" stroke="#e2e2e2" stroke-width="1"/>
<line x1="1116.5" y1="542" x2="1116.5" y2="765.5" stroke="#d4d4d4" stroke-width="1"/>
<line x1="1116.5" y1="522" x2="1116.5" y2="536" stroke="#e2e2e2" stroke-width="1"/>
<line x1="1173.5" y1="542" x2="1173.5" y2="765.5" stroke="#d4d4d4" stroke-width="1"/>
<line x1="1173.5" y1="522" x2="1173.5" y2="536" stroke="#e2e2e2" stroke-width="1"/>
<text x="480.5" y="532.4" font-size="11" text-anchor="middle" fill="#1c1c1c" stroke="#1c1c1c" stroke-width="0.2" letter-spacing="0.55" >Order No</text>
<text x="572.5" y="532.4" font-size="11" text-anchor="middle" fill="#1c1c1c" stroke="#1c1c1c" stroke-width="0.2" letter-spacing="0.55" >Qty</text>
<text x="639.5" y="532.4" font-size="11" text-anchor="middle" fill="#1c1c1c" stroke="#1c1c1c" stroke-width="0.2" letter-spacing="0.55" >Width</text>
<text x="718.7" y="532.4" font-size="11" text-anchor="middle" fill="#1c1c1c" stroke="#1c1c1c" stroke-width="0.2" letter-spacing="0.55" >Drop</text>
<text x="763" y="532.4" font-size="11" text-anchor="start" fill="#1c1c1c" stroke="#1c1c1c" stroke-width="0.2" letter-spacing="0.55" >Fabric</text>
<text x="902.5" y="532.4" font-size="11" text-anchor="start" fill="#1c1c1c" stroke="#1c1c1c" stroke-width="0.2" letter-spacing="0.55" >Style</text>
<text x="1081.5" y="532.4" font-size="11" text-anchor="middle" fill="#1c1c1c" stroke="#1c1c1c" stroke-width="0.2" letter-spacing="0.55" >Hem</text>
<text x="1142.7" y="532.4" font-size="11" text-anchor="middle" fill="#1c1c1c" stroke="#1c1c1c" stroke-width="0.2" letter-spacing="0.55" >Seam</text>
<text x="480.5" y="555.7" font-size="13" text-anchor="middle" fill="#1c1c1c" stroke="#1c1c1c" stroke-width="0.2" letter-spacing="0.45" >0312-6</text>
<text x="572.5" y="555.7" font-size="13" text-anchor="middle" fill="#1c1c1c" stroke="#1c1c1c" stroke-width="0.2" letter-spacing="0.45" >1</text>
<text x="639.4" y="555.7" font-size="13" text-anchor="middle" fill="#1c1c1c" stroke="#1c1c1c" stroke-width="0.2" letter-spacing="0.45" >2,215</text>
<text x="718.6" y="555.7" font-size="13" text-anchor="middle" fill="#1c1c1c" stroke="#1c1c1c" stroke-width="0.2" letter-spacing="0.45" >1,620</text>
<text x="761.5" y="555.7" font-size="13" text-anchor="start" fill="#1c1c1c" stroke="#1c1c1c" stroke-width="0.2" letter-spacing="0.45" >1200 - 295</text>
<text x="900.5" y="555.7" font-size="13" text-anchor="start" fill="#1c1c1c" stroke="#1c1c1c" stroke-width="0.2" letter-spacing="0.45" >Auto Retract</text>
<text x="1081.5" y="555.7" font-size="13" text-anchor="middle" fill="#1c1c1c" stroke="#1c1c1c" stroke-width="0.2" letter-spacing="0.45" >30</text>
<text x="1142.7" y="555.7" font-size="13" text-anchor="middle" fill="#1c1c1c" stroke="#1c1c1c" stroke-width="0.2" letter-spacing="0.45" >20</text>
<text x="480.5" y="573.5500000000001" font-size="13" text-anchor="middle" fill="#1c1c1c" stroke="#1c1c1c" stroke-width="0.2" letter-spacing="0.45" >0312-7</text>
<text x="572.5" y="573.5500000000001" font-size="13" text-anchor="middle" fill="#1c1c1c" stroke="#1c1c1c" stroke-width="0.2" letter-spacing="0.45" >1</text>
<text x="639.4" y="573.5500000000001" font-size="13" text-anchor="middle" fill="#1c1c1c" stroke="#1c1c1c" stroke-width="0.2" letter-spacing="0.45" >1,550</text>
<text x="718.6" y="573.5500000000001" font-size="13" text-anchor="middle" fill="#1c1c1c" stroke="#1c1c1c" stroke-width="0.2" letter-spacing="0.45" >1,620</text>
<text x="761.5" y="573.5500000000001" font-size="13" text-anchor="start" fill="#1c1c1c" stroke="#1c1c1c" stroke-width="0.2" letter-spacing="0.45" >1200 - 295</text>
<text x="900.5" y="573.5500000000001" font-size="13" text-anchor="start" fill="#1c1c1c" stroke="#1c1c1c" stroke-width="0.2" letter-spacing="0.45" >Auto recover with po…</text>
<text x="1081.5" y="573.5500000000001" font-size="13" text-anchor="middle" fill="#1c1c1c" stroke="#1c1c1c" stroke-width="0.2" letter-spacing="0.45" >30</text>
<text x="1142.7" y="573.5500000000001" font-size="13" text-anchor="middle" fill="#1c1c1c" stroke="#1c1c1c" stroke-width="0.2" letter-spacing="0.45" >20</text>
<text x="480.5" y="591.4000000000001" font-size="13" text-anchor="middle" fill="#1c1c1c" stroke="#1c1c1c" stroke-width="0.2" letter-spacing="0.45" >0312-7</text>
<text x="572.5" y="591.4000000000001" font-size="13" text-anchor="middle" fill="#1c1c1c" stroke="#1c1c1c" stroke-width="0.2" letter-spacing="0.45" >1</text>
<text x="639.4" y="591.4000000000001" font-size="13" text-anchor="middle" fill="#1c1c1c" stroke="#1c1c1c" stroke-width="0.2" letter-spacing="0.45" >1,500</text>
<text x="718.6" y="591.4000000000001" font-size="13" text-anchor="middle" fill="#1c1c1c" stroke="#1c1c1c" stroke-width="0.2" letter-spacing="0.45" >1,620</text>
<text x="761.5" y="591.4000000000001" font-size="13" text-anchor="start" fill="#1c1c1c" stroke="#1c1c1c" stroke-width="0.2" letter-spacing="0.45" >1200 - 295</text>
<text x="900.5" y="591.4000000000001" font-size="13" text-anchor="start" fill="#1c1c1c" stroke="#1c1c1c" stroke-width="0.2" letter-spacing="0.45" >Automatic</text>
<text x="1081.5" y="591.4000000000001" font-size="13" text-anchor="middle" fill="#1c1c1c" stroke="#1c1c1c" stroke-width="0.2" letter-spacing="0.45" >30</text>
<text x="1142.7" y="591.4000000000001" font-size="13" text-anchor="middle" fill="#1c1c1c" stroke="#1c1c1c" stroke-width="0.2" letter-spacing="0.45" >20</text>
<text x="480.5" y="609.25" font-size="13" text-anchor="middle" fill="#1c1c1c" stroke="#1c1c1c" stroke-width="0.2" letter-spacing="0.45" >0312-3</text>
<text x="572.5" y="609.25" font-size="13" text-anchor="middle" fill="#1c1c1c" stroke="#1c1c1c" stroke-width="0.2" letter-spacing="0.45" >1</text>
<text x="639.4" y="609.25" font-size="13" text-anchor="middle" fill="#1c1c1c" stroke="#1c1c1c" stroke-width="0.2" letter-spacing="0.45" >2,000</text>
<text x="718.6" y="609.25" font-size="13" text-anchor="middle" fill="#1c1c1c" stroke="#1c1c1c" stroke-width="0.2" letter-spacing="0.45" >1,450</text>
<text x="761.5" y="609.25" font-size="13" text-anchor="start" fill="#1c1c1c" stroke="#1c1c1c" stroke-width="0.2" letter-spacing="0.45" >C547</text>
<text x="900.5" y="609.25" font-size="13" text-anchor="start" fill="#1c1c1c" stroke="#1c1c1c" stroke-width="0.2" letter-spacing="0.45" >Auto Retract</text>
<text x="1081.5" y="609.25" font-size="13" text-anchor="middle" fill="#1c1c1c" stroke="#1c1c1c" stroke-width="0.2" letter-spacing="0.45" >30</text>
<text x="1142.7" y="609.25" font-size="13" text-anchor="middle" fill="#1c1c1c" stroke="#1c1c1c" stroke-width="0.2" letter-spacing="0.45" >20</text>
<text x="480.5" y="627.1" font-size="13" text-anchor="middle" fill="#1c1c1c" stroke="#1c1c1c" stroke-width="0.2" letter-spacing="0.45" >0312-7</text>
<text x="572.5" y="627.1" font-size="13" text-anchor="middle" fill="#1c1c1c" stroke="#1c1c1c" stroke-width="0.2" letter-spacing="0.45" >1</text>
<text x="639.4" y="627.1" font-size="13" text-anchor="middle" fill="#1c1c1c" stroke="#1c1c1c" stroke-width="0.2" letter-spacing="0.45" >2,000</text>
<text x="718.6" y="627.1" font-size="13" text-anchor="middle" fill="#1c1c1c" stroke="#1c1c1c" stroke-width="0.2" letter-spacing="0.45" >1,450</text>
<text x="761.5" y="627.1" font-size="13" text-anchor="start" fill="#1c1c1c" stroke="#1c1c1c" stroke-width="0.2" letter-spacing="0.45" >1200 - 147.5</text>
<text x="900.5" y="627.1" font-size="13" text-anchor="start" fill="#1c1c1c" stroke="#1c1c1c" stroke-width="0.2" letter-spacing="0.45" >Rope &amp; Pulley Ceilin…</text>
<text x="1081.5" y="627.1" font-size="13" text-anchor="middle" fill="#1c1c1c" stroke="#1c1c1c" stroke-width="0.2" letter-spacing="0.45" >30</text>
<text x="1142.7" y="627.1" font-size="13" text-anchor="middle" fill="#1c1c1c" stroke="#1c1c1c" stroke-width="0.2" letter-spacing="0.45" >20</text>
<text x="480.5" y="644.95" font-size="13" text-anchor="middle" fill="#1c1c1c" stroke="#1c1c1c" stroke-width="0.2" letter-spacing="0.45" >0312-1</text>
<text x="572.5" y="644.95" font-size="13" text-anchor="middle" fill="#1c1c1c" stroke="#1c1c1c" stroke-width="0.2" letter-spacing="0.45" >1</text>
<text x="639.4" y="644.95" font-size="13" text-anchor="middle" fill="#1c1c1c" stroke="#1c1c1c" stroke-width="0.2" letter-spacing="0.45" >1,150</text>
<text x="718.6" y="644.95" font-size="13" text-anchor="middle" fill="#1c1c1c" stroke="#1c1c1c" stroke-width="0.2" letter-spacing="0.45" >600</text>
<text x="761.5" y="644.95" font-size="13" text-anchor="start" fill="#1c1c1c" stroke="#1c1c1c" stroke-width="0.2" letter-spacing="0.45" >1200 - 147.5</text>
<text x="900.5" y="644.95" font-size="13" text-anchor="start" fill="#1c1c1c" stroke="#1c1c1c" stroke-width="0.2" letter-spacing="0.45" >Auto Retract</text>
<text x="1081.5" y="644.95" font-size="13" text-anchor="middle" fill="#1c1c1c" stroke="#1c1c1c" stroke-width="0.2" letter-spacing="0.45" >30</text>
<text x="1142.7" y="644.95" font-size="13" text-anchor="middle" fill="#1c1c1c" stroke="#1c1c1c" stroke-width="0.2" letter-spacing="0.45" >20</text>
<rect x="417" y="783.5" width="85.5" height="18.5" rx="5" fill="#ffffff" filter="url(#sh)"/>
<rect x="417" y="783.5" width="85.5" height="18.5" rx="5" fill="none" stroke="#000" stroke-opacity="0.09" stroke-width="0.8"/>
<text x="459.75" y="796.5" font-size="13" text-anchor="middle" fill="#1c1c1c" stroke="#1c1c1c" stroke-width="0.2" letter-spacing="0.5" >Delete</text>
<rect x="807" y="783.5" width="86" height="18.5" rx="5" fill="#ffffff" filter="url(#sh)"/>
<rect x="807" y="783.5" width="86" height="18.5" rx="5" fill="none" stroke="#000" stroke-opacity="0.09" stroke-width="0.8"/>
<text x="850.0" y="796.5" font-size="13" text-anchor="middle" fill="#1c1c1c" stroke="#1c1c1c" stroke-width="0.2" letter-spacing="0.5" >Reset</text>
<rect x="920.5" y="783.5" width="131.5" height="18.5" rx="5" fill="#ffffff" filter="url(#sh)"/>
<rect x="920.5" y="783.5" width="131.5" height="18.5" rx="5" fill="none" stroke="#000" stroke-opacity="0.09" stroke-width="0.8"/>
<text x="986.25" y="796.5" font-size="13" text-anchor="middle" fill="#1c1c1c" stroke="#1c1c1c" stroke-width="0.2" letter-spacing="0.5" >Export Selected</text>
<rect x="1073" y="783.5" width="131" height="18.5" rx="5" fill="#ffffff" filter="url(#sh)"/>
<rect x="1073" y="783.5" width="131" height="18.5" rx="5" fill="none" stroke="#000" stroke-opacity="0.09" stroke-width="0.8"/>
<text x="1138.5" y="796.5" font-size="13" text-anchor="middle" fill="#1c1c1c" stroke="#1c1c1c" stroke-width="0.2" letter-spacing="0.5" >Export List</text>
</svg></body></html>
